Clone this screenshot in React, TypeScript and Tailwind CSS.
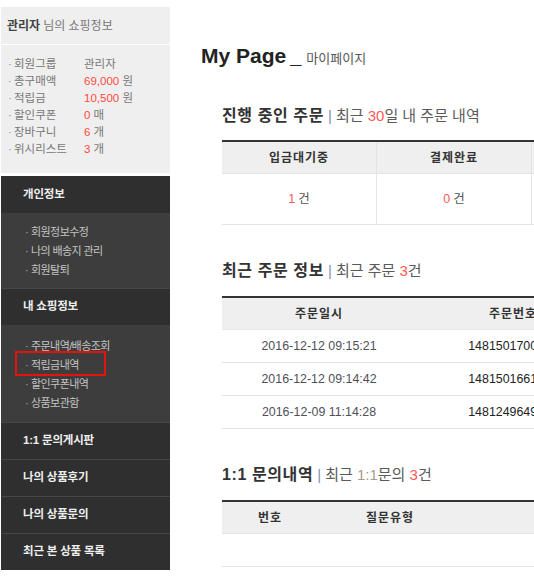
import React from "react";

const F = { fontFamily: '"Liberation Sans","Noto Sans CJK KR",sans-serif' };

function InfoRow({ label, value, unit }: { label: string; value: string; unit?: string }) {
  return (
    <div className="flex h-[17px] items-center text-[11.5px] leading-[17px]">
      <span className="w-[6px] text-[#999]">·</span>
      <span className="w-[70px] text-[#777]">{label}</span>
      {unit ? (
        <span>
          <span className="text-[#ff4a3d]">{value}</span>
          <span className="text-[#777]"> {unit}</span>
        </span>
      ) : (
        <span className="text-[#777]">{value}</span>
      )}
    </div>
  );
}

function DarkHeader({ children, top = true }: { children: React.ReactNode; top?: boolean }) {
  return (
    <div
      className={`flex h-[37px] items-center bg-[#2f2f2f] pl-[22px] text-[11.5px] font-bold tracking-[-0.2px] text-[#eeeeee] ${
        top ? "border-t border-[#474747]" : ""
      }`}
    >
      {children}
    </div>
  );
}

function SubItem({ children, boxed }: { children: React.ReactNode; boxed?: boolean }) {
  return (
    <div className="relative flex h-[19px] items-center pl-[24px] text-[11px] tracking-[-0.6px] text-[#c4c4c4]">
      <span className="mr-[3px] text-[#aaa]">·</span>
      {children}
      {boxed && (
        <div className="absolute left-[14px] top-[-5px] h-[25px] w-[91px] border-2 border-[#e8120c]" />
      )}
    </div>
  );
}

function Title({ main, children }: { main: string; children: React.ReactNode }) {
  return (
    <div className="flex items-baseline text-[15px] leading-[20px]">
      <span className="text-[16px] font-bold tracking-[0.6px] text-[#333]">{main}</span>
      <span className="mx-[4px] text-[#7d93b0]">|</span>
      <span className="text-[#5a5a5a]">{children}</span>
    </div>
  );
}

export default function App() {
  return (
    <div style={F} className="h-[588px] w-[534px] overflow-hidden bg-white">
      <div className="flex pt-[7px]">
        {/* Sidebar */}
        <div className="ml-[1px] w-[169px] shrink-0">
          <div className="bg-[#efefef]">
            <div className="flex h-[38px] items-center border-b border-white pl-[6px] text-[12px]">
              <span className="font-bold text-[#444]">관리자</span>
              <span className="ml-[3px] text-[#777]">님의 쇼핑정보</span>
            </div>
            <div className="pl-[7px] pb-[15px] pt-[11px]">
              <InfoRow label="회원그룹" value="관리자" />
              <InfoRow label="총구매액" value="69,000" unit="원" />
              <InfoRow label="적립금" value="10,500" unit="원" />
              <InfoRow label="할인쿠폰" value="0" unit="매" />
              <InfoRow label="장바구니" value="6" unit="개" />
              <InfoRow label="위시리스트" value="3" unit="개" />
            </div>
          </div>
          <div className="mt-[3px]">
            <DarkHeader top={false}>개인정보</DarkHeader>
            <div className="bg-[#3d3d3d] pb-[8px] pt-[10px]">
              <SubItem>회원정보수정</SubItem>
              <SubItem>나의 배송지 관리</SubItem>
              <SubItem>회원탈퇴</SubItem>
            </div>
            <DarkHeader>내 쇼핑정보</DarkHeader>
            <div className="bg-[#3d3d3d] pb-[9px] pt-[12px]">
              <SubItem>주문내역/배송조회</SubItem>
              <SubItem boxed>적립금내역</SubItem>
              <SubItem>할인쿠폰내역</SubItem>
              <SubItem>상품보관함</SubItem>
            </div>
            <DarkHeader>1:1 문의게시판</DarkHeader>
            <DarkHeader>나의 상품후기</DarkHeader>
            <DarkHeader>나의 상품문의</DarkHeader>
            <DarkHeader>최근 본 상품 목록</DarkHeader>
          </div>
        </div>

        {/* Main */}
        <div className="min-w-0 flex-1 pl-[31px] pt-[37px]">
          <div className="flex items-baseline whitespace-nowrap leading-[24px]">
            <span className="text-[21px] font-bold text-[#222]">My Page</span>
            <span className="ml-[4px] text-[20px] font-bold text-[#222]">_</span>
            <span className="ml-[5px] text-[13px] text-[#555]">마이페이지</span>
          </div>

          <div className="pl-[21px]">
            {/* Section 1 */}
            <div className="mt-[35px] whitespace-nowrap">
              <Title main="진행 중인 주문">
                최근 <span className="text-[#ff5a5a]">30</span>일 내 주문 내역
              </Title>
            </div>
            <div className="mt-[14px] w-[620px] border-t-2 border-[#333]">
              <div className="flex h-[32px] border-b border-[#e3e3e3] bg-[#efefef] text-[12px] font-bold text-[#333]">
                {["입금대기중", "결제완료", "배송준비중", "배송중"].map((h) => (
                  <div key={h} className="flex w-[155px] items-center justify-center border-r border-[#e3e3e3] tracking-[1px]">
                    {h}
                  </div>
                ))}
              </div>
              <div className="flex h-[51px] border-b border-[#e3e3e3] text-[12.5px]">
                {["1", "0", "0", "0"].map((n, i) => (
                  <div key={i} className="flex w-[155px] items-center justify-center border-r border-[#e3e3e3]">
                    <span className="text-[#ff5a5a]">{n}</span>
                    <span className="ml-[3px] text-[#555]">건</span>
                  </div>
                ))}
              </div>
            </div>

            {/* Section 2 */}
            <div className="mt-[36px] whitespace-nowrap">
              <Title main="최근 주문 정보">
                최근 주문 <span className="text-[#ff5a5a]">3</span>건
              </Title>
            </div>
            <div className="mt-[15px] w-[620px] border-t-2 border-[#333]">
              <div className="flex h-[32px] border-b border-[#e3e3e3] bg-[#efefef] text-[12px] font-bold text-[#333]">
                {["주문일시", "주문번호", "상품명"].map((h) => (
                  <div key={h} className="flex w-[194px] items-center justify-center tracking-[1px]">
                    {h}
                  </div>
                ))}
              </div>
              {[
                ["2016-12-12 09:15:21", "1481501700152"],
                ["2016-12-12 09:14:42", "1481501661983"],
                ["2016-12-09 11:14:28", "1481249649471"],
              ].map(([d, n]) => (
                <div key={n} className="flex h-[33px] border-b border-[#e3e3e3] text-[12.4px]">
                  <div className="flex w-[194px] items-center justify-center text-[#4f4f5a]">{d}</div>
                  <div className="flex w-[194px] items-center justify-center text-[#222]">{n}</div>
                </div>
              ))}
            </div>

            {/* Section 3 */}
            <div className="mt-[36px] whitespace-nowrap">
              <Title main="1:1 문의내역">
                최근 <span className="text-[#a89c8c]">1:1</span>문의 <span className="text-[#ff5a5a]">3</span>건
              </Title>
            </div>
            <div className="mt-[15px] w-[620px] border-t-2 border-[#333]">
              <div className="flex h-[32px] border-b border-[#e3e3e3] bg-[#efefef] text-[12px] font-bold text-[#333]">
                <div className="flex w-[96px] items-center justify-center tracking-[1px]">번호</div>
                <div className="flex w-[144px] items-center justify-center tracking-[1px]">질문유형</div>
                <div className="flex w-[260px] items-center justify-center tracking-[1px]">제목</div>
              </div>
              <div className="h-[33px] border-b border-[#e3e3e3]" />
            </div>
          </div>
        </div>
      </div>
    </div>
  );
}
